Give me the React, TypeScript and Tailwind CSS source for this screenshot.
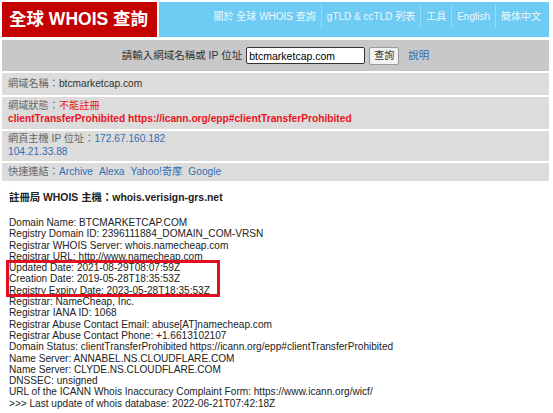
const font = "font-['Liberation_Sans','Noto_Sans_CJK_TC',sans-serif]";

const navItems = ["關於 全球 WHOIS 查詢", "gTLD & ccTLD 列表", "工具", "English", "簡体中文"];

const whoisLines = [
  "Domain Name: BTCMARKETCAP.COM",
  "Registry Domain ID: 2396111884_DOMAIN_COM-VRSN",
  "Registrar WHOIS Server: whois.namecheap.com",
  "Registrar URL: http://www.namecheap.com",
];

const boxedLines = [
  "Updated Date: 2021-08-29T08:07:59Z",
  "Creation Date: 2019-05-28T18:35:53Z",
  "Registry Expiry Date: 2023-05-28T18:35:53Z",
];

const restLines = [
  "Registrar: NameCheap, Inc.",
  "Registrar IANA ID: 1068",
  "Registrar Abuse Contact Email: abuse[AT]namecheap.com",
  "Registrar Abuse Contact Phone: +1.6613102107",
  "Domain Status: clientTransferProhibited https://icann.org/epp#clientTransferProhibited",
  "Name Server: ANNABEL.NS.CLOUDFLARE.COM",
  "Name Server: CLYDE.NS.CLOUDFLARE.COM",
  "DNSSEC: unsigned",
  "URL of the ICANN Whois Inaccuracy Complaint Form: https://www.icann.org/wicf/",
  ">>> Last update of whois database: 2022-06-21T07:42:18Z",
];

const Label = ({ children }: { children: React.ReactNode }) => (
  <span className="text-[#666666]">{children}：</span>
);

export default function App() {
  return (
    <div className={`${font} w-[553px] h-[413px] overflow-hidden bg-white pl-[2px] pr-[4px] pt-[2px]`}>
      {/* header */}
      <div className="flex gap-[2px] h-[35px]">
        <div className="w-[155px] bg-[#c40000] flex items-center pl-[7px]">
          <span className="text-white font-bold text-[17.5px] leading-none whitespace-nowrap">
            全球 WHOIS 查詢
          </span>
        </div>
        <div className="flex-1 bg-[#6ecbf3] flex justify-end items-start pt-[2px] pr-[3px]">
          {navItems.map((item, i) => (
            <div
              key={i}
              className={`h-[24px] flex items-center px-[5px] text-[10px] text-[#eef8ff] whitespace-nowrap ${
                i > 0 ? "border-l border-[#9adaf5]" : ""
              }`}
            >
              {item}
            </div>
          ))}
        </div>
      </div>

      {/* search */}
      <div className="mt-[3px] h-[31px] bg-[#c8c8c8] flex items-center justify-center gap-[4px] text-[10.5px]">
        <span className="text-[#333333]">請輸入網域名稱或 IP 位址</span>
        <input
          readOnly
          value="btcmarketcap.com"
          className="w-[119px] h-[17px] border border-[#333333] rounded-[2px] bg-white px-[2px] text-[10.5px] text-black outline-none"
        />
        <button className="h-[18px] px-[4px] border border-[#9a9a9a] rounded-[2px] bg-[#f2f2f2] text-[10px] text-[#333333]">
          查詢
        </button>
        <span className="ml-[5px] text-[#2f6fb5]">說明</span>
      </div>

      {/* info rows */}
      <div className="text-[10.2px] leading-[12.5px]">
        <div className="mt-[2px] h-[22px] bg-[#dcdcdc] flex items-center pl-[6px]">
          <Label>網域名稱</Label>
          <span className="text-[#333333]">btcmarketcap.com</span>
        </div>
        <div className="mt-[2px] h-[32px] bg-[#dcdcdc] pl-[6px] pt-[3px]">
          <div>
            <Label>網域狀態</Label>
            <span className="text-[#e8141e]">不能註冊</span>
          </div>
          <div className="font-bold text-[#e8141e]">
            clientTransferProhibited https://icann.org/epp#clientTransferProhibited
          </div>
        </div>
        <div className="mt-[2px] h-[30px] bg-[#dcdcdc] pl-[6px] pt-[2px]">
          <div>
            <Label>網頁主機 IP 位址</Label>
            <span className="text-[#2f6fb5]">172.67.160.182</span>
          </div>
          <div className="text-[#2f6fb5]">104.21.33.88</div>
        </div>
        <div className="mt-[2px] h-[18px] bg-[#dcdcdc] flex items-center pl-[6px]">
          <Label>快速連結</Label>
          <span className="text-[#2f6fb5] flex gap-[6px]">
            <span>Archive</span>
            <span>Alexa</span>
            <span>Yahoo!奇摩</span>
            <span>Google</span>
          </span>
        </div>
      </div>

      {/* whois */}
      <div className="pl-[7px] pt-[10px] text-[10.1px] text-[#222222]">
        <div className="font-bold text-[10.4px] leading-[13px]">註冊局 WHOIS 主機：whois.verisign-grs.net</div>
        <div className="mt-[13px] leading-[11.3px]">
          {whoisLines.map((l, i) => (
            <div key={i} className="whitespace-nowrap">{l}</div>
          ))}
          <div className="relative">
            <div className="absolute left-[-3px] top-[-2px] w-[214px] h-[37px] border-[3px] border-[#e0101e]" />
            {boxedLines.map((l, i) => (
              <div key={i} className="whitespace-nowrap">{l}</div>
            ))}
          </div>
          {restLines.map((l, i) => (
            <div key={i} className="whitespace-nowrap">{l}</div>
          ))}
        </div>
      </div>
    </div>
  );
}
